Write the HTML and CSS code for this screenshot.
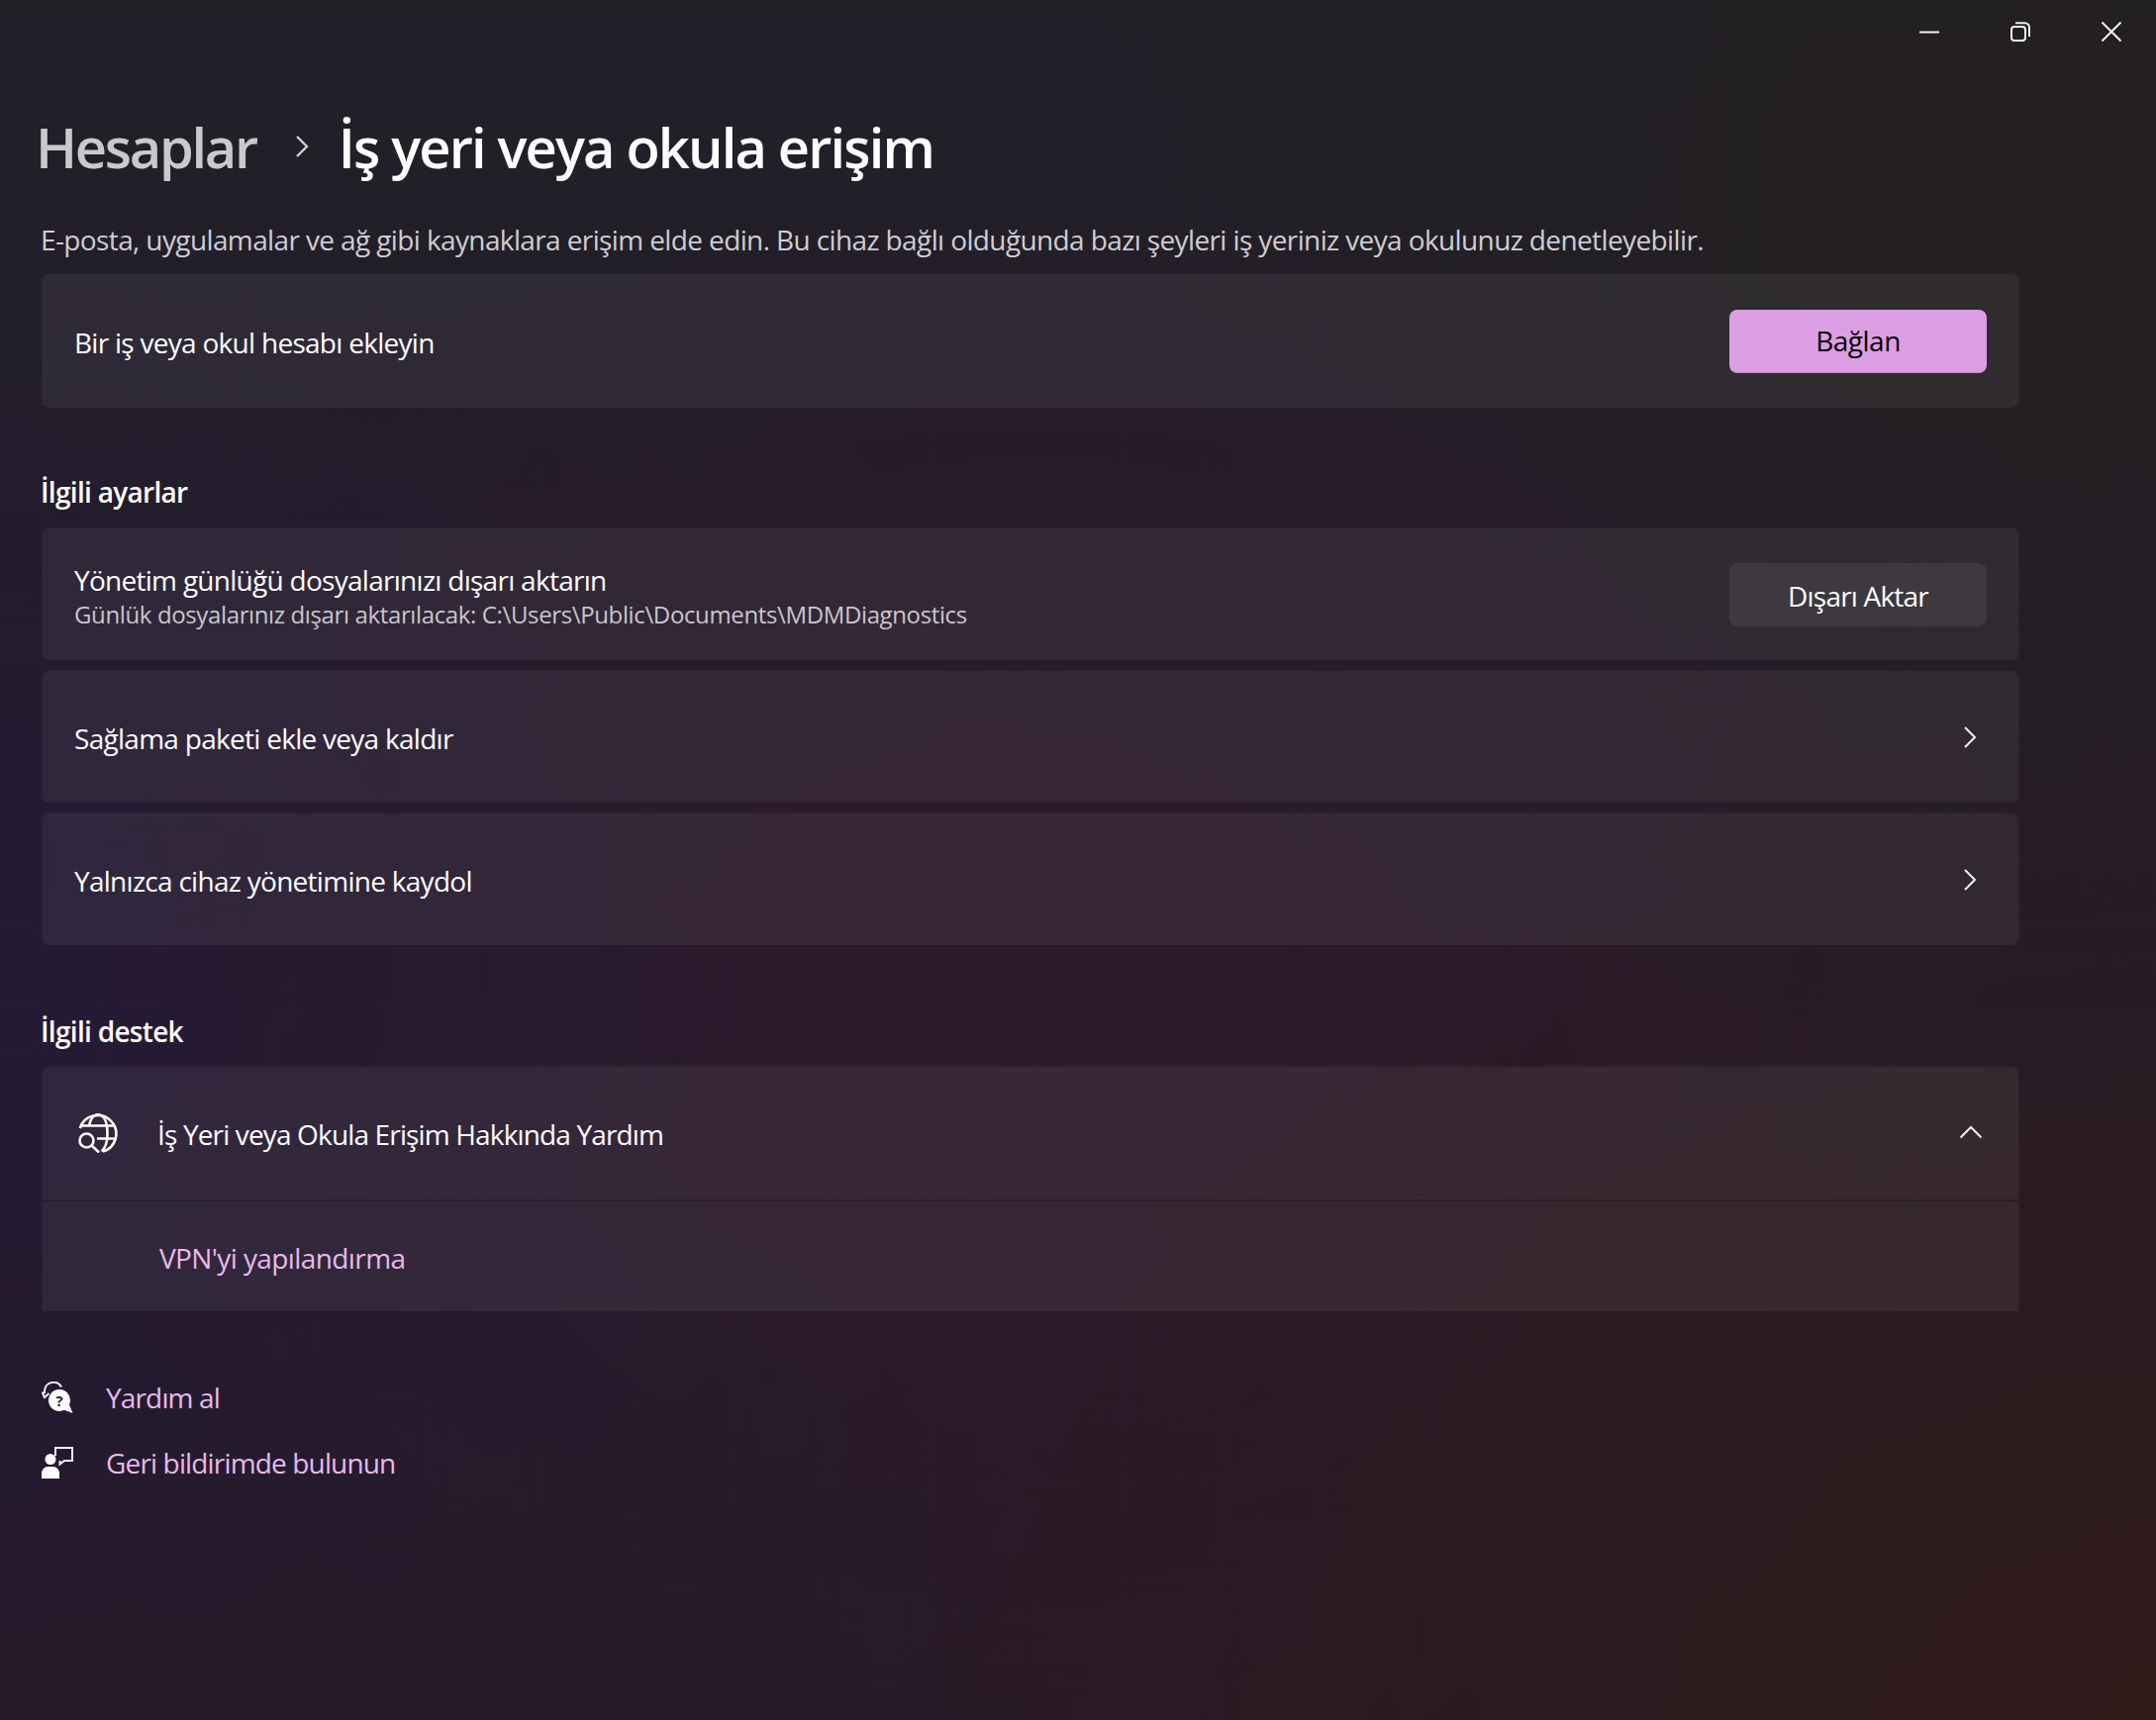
FILE: index.html
```html
<!DOCTYPE html>
<html lang="tr">
<head>
    <meta charset="UTF-8">
    <title>İş yeri veya okula erişim</title>
    <link rel="stylesheet" href="styles.css">
</head>
<body>
    <div class="titlebar">
        <div class="win-btn">
            <svg width="20" height="20" viewBox="0 0 20 20"><path d="M0 10.500h20" class="ico"/></svg>
        </div>
        <div class="win-btn">
            <svg width="20" height="20" viewBox="0 0 20 20"><rect x="1" y="5" width="14" height="14" rx="3" class="ico"/><path d="M5 1.200h9.500a4.500 4.500 0 0 1 4.500 4.500V15" class="ico"/></svg>
        </div>
        <div class="win-btn">
            <svg width="20" height="20" viewBox="0 0 20 20"><path d="M0.500 0.500l19 19M19.500 0.500l-19 19" class="ico"/></svg>
        </div>
    </div>

    <main class="page">
        <div class="breadcrumb">
            <span class="crumb-parent">Hesaplar</span>
            <svg class="crumb-sep" width="14" height="24" viewBox="0 0 14 24"><path d="M2 2l10 10L2 22" class="ico-grey"/></svg>
            <span class="crumb-current">İş yeri veya okula erişim</span>
        </div>
        <p class="desc">E-posta, uygulamalar ve ağ gibi kaynaklara erişim elde edin. Bu cihaz bağlı olduğunda bazı şeyleri iş yeriniz veya okulunuz denetleyebilir.</p>

        <div class="card">
            <span class="row-title">Bir iş veya okul hesabı ekleyin</span>
            <div class="btn btn-accent">Bağlan</div>
        </div>

        <h2 class="section first">İlgili ayarlar</h2>
        <div class="stack">
            <div class="card">
                <div class="row-text">
                    <div class="row-title tight">Yönetim günlüğü dosyalarınızı dışarı aktarın</div>
                    <div class="row-sub">Günlük dosyalarınız dışarı aktarılacak: C:\Users\Public\Documents\MDMDiagnostics</div>
                </div>
                <div class="btn btn-plain">Dışarı Aktar</div>
            </div>
            <div class="card">
                <span class="row-title">Sağlama paketi ekle veya kaldır</span>
                <svg class="chev" width="14" height="24" viewBox="0 0 14 24"><path d="M2 2l10 10L2 22" class="ico"/></svg>
            </div>
            <div class="card">
                <span class="row-title">Yalnızca cihaz yönetimine kaydol</span>
                <svg class="chev" width="14" height="24" viewBox="0 0 14 24"><path d="M2 2l10 10L2 22" class="ico"/></svg>
            </div>
        </div>

        <h2 class="section second">İlgili destek</h2>
        <div class="expander">
            <div class="exp-head">
                <svg class="globe" width="40" height="40" viewBox="0 0 40 40">
                    <path d="M1.800 15A18.700 18.700 0 1 1 25 38.600" class="ico-bold"/>
                    <path d="M11 13C12 6 15.500 1.300 20 1.300s8 4.700 9 12c.9 6.500.6 13-1 18-1 3-2.500 5.500-4.500 7" class="ico-bold"/>
                    <path d="M3 12.500h34M19 25.500h20" class="ico-bold"/>
                    <circle cx="8.500" cy="27.500" r="7" class="ico-bold"/>
                    <path d="M13.500 32.500l7.500 7" class="ico-bold"/>
                </svg>
                <span class="row-title exp-title">İş Yeri veya Okula Erişim Hakkında Yardım</span>
                <svg class="chev-up" width="24" height="14" viewBox="0 0 24 14"><path d="M1.500 12.500L12 2l10.500 10.500" class="ico"/></svg>
            </div>
            <div class="exp-body">
                <a class="link">VPN'yi yapılandırma</a>
            </div>
        </div>

        <div class="help">
            <div class="help-row">
                <svg width="32" height="32" viewBox="0 0 32 32">
                    <path d="M20 5.500C18 1.800 14 .2 10 1 5.500 2 2.500 6 3 12" class="ico-thin"/>
                    <path d="M0.500 10.500L3 16 7.500 12" class="ico-thin"/>
                    <path d="M18 8a11 11 0 1 0 5 20.800L31.500 32 28 23.500A11 11 0 0 0 18 8z" class="fill"/>
                    <text x="18" y="24.500" class="qmark">?</text>
                </svg>
                <a class="link help-link">Yardım al</a>
            </div>
            <div class="help-row">
                <svg width="32" height="32" viewBox="0 0 32 32">
                    <path d="M14 9V1h17v13h-8l-4.500 3.500V14" class="ico-thin"/>
                    <circle cx="9" cy="12.500" r="5.500" class="fill"/>
                    <path d="M0 32v-5c0-4 3-7 6-7h6c3 0 6 3 6 7v5z" class="fill"/>
                </svg>
                <a class="link help-link">Geri bildirimde bulunun</a>
            </div>
        </div>
    </main>
</body>
</html>
```

FILE: styles.css
```css
html, body {
    height: 100%;
}
body {
    margin: 0;
    font-family: "Open Sans", "Noto Sans", sans-serif;
    color: #fff;
    overflow: hidden;
    background-color: #241c2a;
    background-image:
        radial-gradient(1500px 1150px at 2178px 1738px, rgba(48, 27, 26, 1), rgba(48, 27, 26, 0) 100%),
        radial-gradient(1000px 850px at 1050px 1000px, rgba(48, 24, 44, 0.85), rgba(48, 24, 44, 0) 100%),
        radial-gradient(1100px 900px at 0 1000px, rgba(36, 26, 54, 0.85), rgba(36, 26, 54, 0) 100%),
        radial-gradient(1100px 800px at 2178px 200px, rgba(36, 32, 33, 1), rgba(36, 32, 33, 0) 100%),
        linear-gradient(180deg, #212027 0%, #241c2a 60%, #261b28 100%);
}
.ico, .ico-grey, .ico-thin, .ico-bold {
    fill: none;
    stroke: #f0f0f0;
    stroke-width: 2;
}
.ico-grey {
    stroke: #d2d1d5;
    stroke-width: 2.4;
}
.ico-bold {
    stroke: #fff;
    stroke-width: 2.6;
}
.fill {
    fill: #fff;
}
.qmark {
    font-size: 15px;
    font-weight: 700;
    fill: #2a1c30;
    text-anchor: middle;
}

.titlebar {
    display: flex;
    justify-content: flex-end;
    height: 64px;
}
.win-btn {
    width: 92px;
    height: 64px;
    display: flex;
    justify-content: center;
    padding: 22px 0 0 2px;
    box-sizing: border-box;
}

.page {
    width: 1998px;
    margin-left: 42px;
}
.breadcrumb {
    display: flex;
    align-items: center;
    height: 84px;
    margin-top: 42px;
    margin-left: -6px;
    font-size: 56px;
    font-weight: 600;
    letter-spacing: -1.85px;
}
.crumb-parent {
    color: #c9c8cc;
    letter-spacing: -2.3px;
}
.crumb-sep {
    margin: 0 30px 0 39px;
}
.desc {
    margin: 32px 0 14px -1px;
    height: 40px;
    line-height: 40px;
    font-size: 28px;
    letter-spacing: -0.62px;
    color: #cfcdd2;
    white-space: nowrap;
}
.card {
    display: flex;
    justify-content: space-between;
    align-items: center;
    box-sizing: border-box;
    height: 137px;
    padding: 0 32px;
    background: rgba(255, 255, 255, 0.055);
    border: 1px solid rgba(0, 0, 0, 0.12);
    border-bottom-color: rgba(0, 0, 0, 0.28);
    border-radius: 8px;
}
.row-title {
    font-size: 28px;
    letter-spacing: -0.72px;
    line-height: 40px;
    position: relative;
    top: 1px;
}
.row-text {
    padding-top: 5px;
}
.row-title.tight {
    line-height: 36px;
    top: 0;
}
.exp-title {
    letter-spacing: -0.85px;
}
.row-sub {
    font-size: 24px;
    letter-spacing: -0.37px;
    line-height: 34px;
    color: #c9c6cc;
}
.btn {
    width: 260px;
    height: 64px;
    display: flex;
    align-items: center;
    justify-content: center;
    border-radius: 8px;
    font-size: 28px;
    letter-spacing: -0.5px;
    background: rgba(255, 255, 255, 0.07);
}
.btn-plain {
    box-sizing: border-box;
    padding-top: 2px;
    letter-spacing: -0.8px;
}
.btn-accent {
    background: #dc9ee3;
    border-bottom: 1px solid #c98ad0;
    box-sizing: border-box;
    color: #000;
}
.section {
    margin: 0 0 16px -1px;
    height: 40px;
    line-height: 40px;
    font-size: 28px;
    font-weight: 600;
    letter-spacing: -0.7px;
}
.section.first {
    margin-top: 64px;
}
.section.second {
    margin-top: 66px;
    margin-bottom: 15px;
}
.stack {
    display: flex;
    flex-direction: column;
    gap: 9px;
}
.stack .card {
    height: 135px;
}
.chev {
    margin: 0 10px 0 0;
}
.expander {
    background: rgba(255, 255, 255, 0.06);
    border: 1px solid rgba(0, 0, 0, 0.14);
    border-bottom-color: rgba(0, 0, 0, 0.28);
    border-radius: 8px 8px 2px 2px;
}
.exp-head {
    display: flex;
    align-items: center;
    height: 134px;
    padding: 0 36px 0 36px;
    border-bottom: 2px solid rgba(0, 0, 0, 0.22);
}
.globe {
    margin-right: 40px;
}
.chev-up {
    margin-left: auto;
    margin-top: -2px;
}
.exp-body {
    height: 111px;
    display: flex;
    align-items: center;
    padding: 2px 0 0 118px;
    box-sizing: border-box;
}
.link {
    font-size: 28px;
    letter-spacing: -0.6px;
    color: #e8b9ec;
}
.help-link {
    letter-spacing: -0.85px;
}
.help {
    margin-top: 53px;
}
.help-row {
    display: flex;
    align-items: center;
    height: 66px;
    gap: 33px;
}
```
